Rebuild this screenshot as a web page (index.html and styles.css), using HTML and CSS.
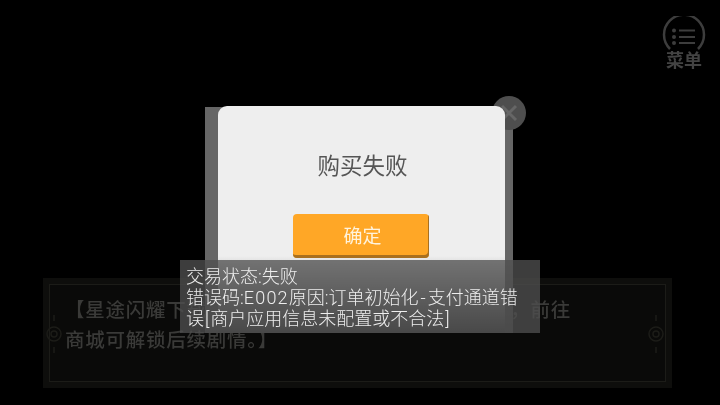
FILE: index.html
```html
<!DOCTYPE html>
<html lang="zh-CN">
<head>
<meta charset="utf-8">
<title>购买失败</title>
<link rel="stylesheet" href="styles.css">
</head>
<body>
<main class="screen">
  <section class="story">
    <div class="story-inner">
      <svg class="orn orn-left" viewBox="0 0 20 50" width="20" height="50"><g fill="none" stroke="#1c1c18" stroke-width="1.5"><circle cx="10" cy="25" r="7"/><circle cx="10" cy="25" r="3"/><path d="M10 6v6M10 38v6"/></g></svg>
      <p class="story-text">【星途闪耀下载正式版本，即可获得更多空位存档，前往<br>商城可解锁后续剧情。】</p>
      <svg class="orn orn-right" viewBox="0 0 20 50" width="20" height="50"><g fill="none" stroke="#1c1c18" stroke-width="1.5"><circle cx="10" cy="25" r="7"/><circle cx="10" cy="25" r="3"/><path d="M10 6v6M10 38v6"/></g></svg>
    </div>
  </section>

  <aside class="menu">
    <svg class="menu-icon" viewBox="0 0 44 36" width="44" height="36">
      <path d="M8 33A20 20 0 1 1 36 33" fill="none" stroke="#3d3d3d" stroke-width="2.5"/>
      <g fill="#3d3d3d"><circle cx="12" cy="14.500" r="2"/><circle cx="12" cy="21" r="2"/><circle cx="12" cy="27" r="2"/></g>
      <path d="M17 14.500h16M17 21h16M17 27h16" stroke="#3d3d3d" stroke-width="2"/>
    </svg>
    <span class="menu-label">菜单</span>
  </aside>

  <section class="modal">
    <div class="close-btn">
      <svg viewBox="0 0 34 34" width="34" height="34"><path d="M10 10l14 14M24 10l-14 14" stroke="#666" stroke-width="3"/></svg>
    </div>
    <div class="dialog">
      <h1 class="dialog-title">购买失败</h1>
      <button class="confirm" type="button">确定</button>
    </div>
  </section>

  <div class="toast">交易状态:失败<br>错误码:<span class="wide">E002</span>原因:订单初始化<span class="dash">-</span>支付通道错误<span class="brk">[</span>商户应用信息未配置或不合法<span class="brk">]</span></div>
</main>
</body>
</html>
```

FILE: styles.css
```css
* { box-sizing: border-box; }
html, body { margin: 0; padding: 0; background: #000; }
body { font-family: Roboto, "Noto Sans CJK SC", sans-serif; }

.screen {
  position: relative;
  width: 720px;
  height: 405px;
  overflow: hidden;
  background: #000;
  display: flex;
  flex-direction: column;
  justify-content: flex-end;
  padding: 0 48px 17px 43px;
  filter: blur(.35px);
}

/* story box */
.story {
  height: 110px;
  padding: 6px;
  background: #0e0e0c;
}
.story-inner {
  position: relative;
  height: 98px;
  padding: 11px 0 0 15px;
  border: 1px solid #1c1c18;
  background: #0a0a09;
}
.story-text {
  margin: 0;
  font-size: 19.500px;
  line-height: 30px;
  letter-spacing: .74px;
  font-weight: 500;
  color: #3a3a38;
  white-space: nowrap;
}
.orn { position: absolute; top: 24px; }
.orn-left { left: -6px; }
.orn-right { right: -1px; }

/* menu */
.menu {
  position: absolute;
  top: 16px;
  left: 662px;
  width: 44px;
  display: flex;
  flex-direction: column;
  align-items: center;
}
.menu-icon { display: block; }
.menu-label {
  margin-top: -1px;
  font-size: 18px;
  line-height: 20px;
  font-weight: 700;
  color: #434343;
  white-space: nowrap;
}

/* purchase dialog */
.modal {
  position: absolute;
  left: 205px;
  top: 107px;
  width: 308px;
  height: 226px;
  background: linear-gradient(#666 0, #666 153px, #3a3a3a 226px);
}
.close-btn {
  position: absolute;
  left: 287px;
  top: -11px;
  width: 34px;
  height: 34px;
  border-radius: 50%;
  background: #4e4e4e;
}
.close-btn svg { display: block; }
.dialog {
  position: absolute;
  left: 13px;
  top: -1px;
  width: 287px;
  height: 227px;
  border-radius: 9px 9px 0 0;
  background: linear-gradient(#eee 0, #eee 150px, #333 227px);
  display: flex;
  flex-direction: column;
  align-items: center;
}
.dialog-title {
  margin: 43px 0 0 2px;
  font-size: 22.500px;
  line-height: 30px;
  font-weight: 400;
  color: #555;
  font-family: "Noto Sans CJK SC", sans-serif;
}
.confirm {
  margin: 35px 1px 0 0;
  width: 136px;
  height: 44px;
  padding: 0 0 4px 3px;
  border: 0;
  border-radius: 4px;
  background: #ffa726;
  box-shadow: inset -1px -3px 0 #a9701f;
  font-family: "Noto Sans CJK SC", sans-serif;
  font-size: 19px;
  color: #fff3dc;
}

/* toast */
.toast {
  position: absolute;
  left: 180px;
  top: 260px;
  width: 360px;
  height: 73px;
  padding: 6px 6px 0;
  background: rgba(80, 80, 80, .77);
  color: #eee;
  font-size: 18px;
  line-height: 21px;
  font-weight: 300;
}
.wide { letter-spacing: 1.200px; }
.dash { padding: 0 2px; }
.brk { padding: 0 1px; }
```
